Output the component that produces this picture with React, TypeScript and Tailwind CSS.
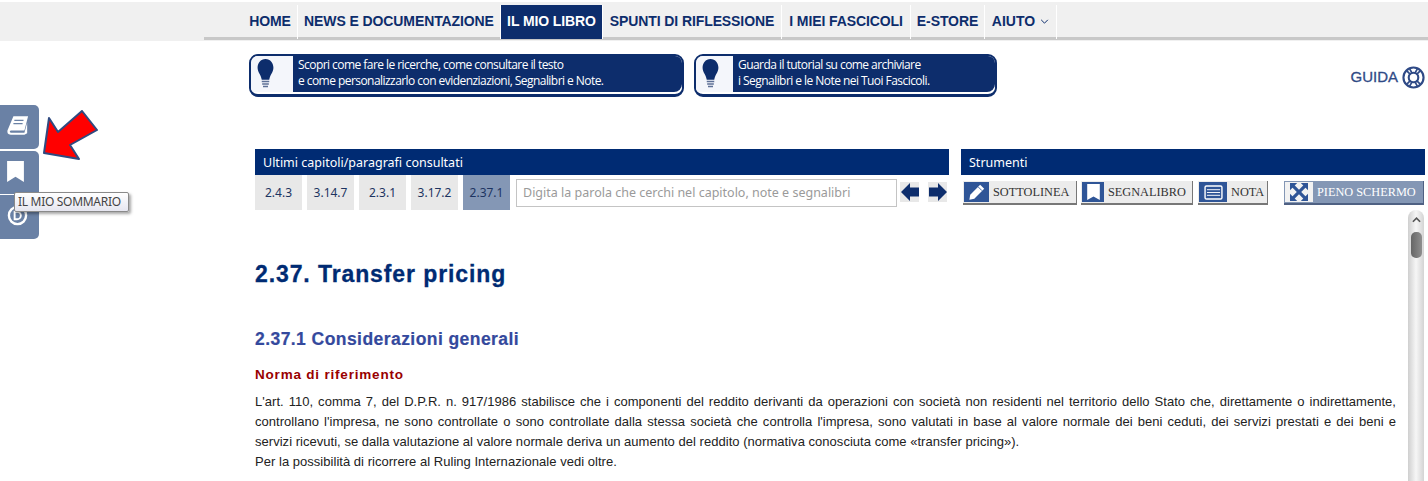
import React from "react";

const navItems = ["HOME", "NEWS E DOCUMENTAZIONE", "IL MIO LIBRO", "SPUNTI DI RIFLESSIONE", "I MIEI FASCICOLI", "E-STORE"];
const navWidths = ["w-[55px]", "w-[203px]", "w-[102px]", "w-[179px]", "w-[129px]", "w-[74px]"];
const recent = ["2.4.3", "3.14.7", "2.3.1", "3.17.2", "2.37.1"];

function Bulb() {
  return (
    <svg viewBox="0 0 20 36" className="w-[17px] h-[30px]">
      <path d="M10 0C4 0 .5 5 .5 10.500c0 5.500 4 8 5 14.500h9c1-6.500 5-9 5-14.500C19.500 5 16 0 10 0z" fill="#0d2d6c" />
      <path d="M5.500 27h9M6 30h8M7 33h6" stroke="#5d7096" strokeWidth="2" />
    </svg>
  );
}

function Banner({ w, left, lines }: { w: string; left: string; lines: string[] }) {
  return (
    <div className={`${w} h-[43px] rounded-[9px] border-2 border-b-[3px] border-[#0d2d6c] bg-white overflow-hidden`}>
      <div className="h-[36px] flex">
        <div className={`${left} bg-[#f4f6fb] flex items-center pl-[6px] shrink-0`}>
          <Bulb />
        </div>
        <div className="flex-1 bg-[#0d2d6c] rounded-br-[8px] pl-[5px] pt-[1px] text-white text-[12px] leading-[16px] tracking-[-0.55px] font-['Open_Sans',sans-serif] font-medium whitespace-nowrap">
          {lines.map((l) => (
            <div key={l}>{l}</div>
          ))}
        </div>
      </div>
    </div>
  );
}

function ToolButton({ w, cell, label, icon, muted }: { w: string; cell: string; label: string; icon: React.ReactNode; muted?: boolean }) {
  return (
    <div className={`${w} h-[24px] flex items-start pt-[1px] pl-[1px] border-r border-b-2 ${muted ? "bg-[#8497b5] text-white border-[#4f6183]" : "bg-[#ececec] text-[#333] border-[#777]"}`}>
      <div className={`${cell} h-[20px] shrink-0 flex items-center justify-center ${muted ? "bg-[#f2f2f2]" : "bg-[#2f5597]"}`}>{icon}</div>
      <span className="pl-[4px] text-[12.300px] leading-[20px] font-['Liberation_Serif',serif] whitespace-nowrap">{label}</span>
    </div>
  );
}

export default function App() {
  return (
    <div className="relative w-[1428px] h-[481px] overflow-hidden bg-white font-['Liberation_Sans',sans-serif]">
      {/* top menu */}
      <div className="mt-[2px] h-[39px] bg-[#f0f0f0]">
        <div className="ml-[204px] h-[38px] pl-[39px] flex items-start border-b-[3px] border-[#c8c8c8]">
          {navItems.map((item, i) => (
            <div
              key={item}
              className={`${navWidths[i]} h-[34px] mt-[3px] pb-[2px] flex items-center justify-center text-[14px] tracking-[-0.1px] font-bold whitespace-nowrap border-r border-white ${
                item === "IL MIO LIBRO" ? "bg-[#0d2d6c] text-white" : "text-[#0d2d6c]"
              }`}
            >
              {item}
            </div>
          ))}
          <div className="w-[72px] h-[34px] mt-[3px] pb-[2px] flex items-center justify-center gap-[5px] text-[14px] font-bold text-[#0d2d6c] border-r border-white">
            AIUTO
            <svg viewBox="0 0 10 6" className="w-[9px] h-[5px]">
              <path d="M1 1l4 4 4-4" fill="none" stroke="#0d2d6c" strokeWidth="1.200" />
            </svg>
          </div>
        </div>
      </div>

      {/* banners */}
      <div className="flex items-start pl-[249px] pr-[3px] mt-[13px]">
        <Banner
          w="w-[435px]"
          left="w-[42px]"
          lines={["Scopri come fare le ricerche, come consultare il testo", "e come personalizzarlo con evidenziazioni, Segnalibri e Note."]}
        />
        <div className="ml-[10px]">
          <Banner
            w="w-[303px]"
            left="w-[37px]"
            lines={["Guarda il tutorial su come archiviare", "i Segnalibri e le Note nei Tuoi Fascicoli."]}
          />
        </div>
        <div className="ml-auto mt-[12px] flex items-center gap-[4px] text-[#2f4a86] text-[15px] [-webkit-text-stroke:0.3px_#2f4a86]">
          GUIDA
          <svg viewBox="0 0 24 24" className="w-[23px] h-[23px]" fill="none" stroke="#2f4a86">
            <circle cx="12" cy="12" r="10.500" strokeWidth="2.200" />
            <circle cx="12" cy="12" r="5" strokeWidth="2.200" />
            <path d="M5 5l4 4M19 5l-4 4M5 19l4-4M19 19l-4-4M8 3l2.500 4.500M16 3l-2.500 4.500M8 21l2.500-4.500M16 21l-2.500-4.500" strokeWidth="1.800" />
          </svg>
        </div>
      </div>

      {/* tool bars */}
      <div className="flex pl-[255px] mt-[52px]">
        <div className="w-[694px]">
          <div className="h-[26px] bg-[#002b73] text-white text-[12.500px] leading-[27px] pl-[8px] font-['Noto_Sans',sans-serif]">
            Ultimi capitoli/paragrafi consultati
          </div>
          <div className="flex items-start">
            {recent.map((r, i) => (
              <div
                key={r}
                className={`w-[47px] h-[35px] mr-[5px] flex items-center justify-center text-[12px] text-[#1d3461] font-['Noto_Sans',sans-serif] ${
                  i === 4 ? "bg-[#8497b5]" : "bg-[#e8e8e8]"
                }`}
              >
                {r}
              </div>
            ))}
            <div className="ml-[1px] mt-[4px] w-[381px] h-[28px] border border-[#c4c4c4] text-[#9a9a9a] text-[12.500px] leading-[26px] pl-[6px] font-['Noto_Sans',sans-serif]">
              Digita la parola che cerchi nel capitolo, note e segnalibri
            </div>
            <div className="ml-[3px] mt-[7px] flex gap-[9px]">
              <div className="w-[19px] h-[20px] bg-[#e8e8e8] flex items-center justify-center">
                <svg viewBox="0 0 18 18" className="w-[18px] h-[18px]">
                  <path d="M0 9l9-9v4.500h9v9H9V18z" fill="#0d2d6c" />
                </svg>
              </div>
              <div className="w-[19px] h-[20px] bg-[#e8e8e8] flex items-center justify-center">
                <svg viewBox="0 0 18 18" className="w-[18px] h-[18px]">
                  <path d="M18 9L9 0v4.500H0v9h9V18z" fill="#0d2d6c" />
                </svg>
              </div>
            </div>
          </div>
        </div>
        <div className="ml-[12px] w-[464px]">
          <div className="h-[26px] bg-[#002b73] text-white text-[12.500px] leading-[27px] pl-[8px] font-['Noto_Sans',sans-serif]">
            Strumenti
          </div>
          <div className="flex mt-[6px] pl-[2px]">
            <ToolButton
              w="w-[114px]"
              cell="w-[25px]"
              label="SOTTOLINEA"
              icon={
                <svg viewBox="0 0 20 20" className="w-[18px] h-[18px]">
                  <path d="M13.500 2l4.500 4.500L7 17.500l-5.500 1 1-5.500z" fill="white" />
                  <path d="M11.500 4.500l4 4" stroke="#2f5597" strokeWidth="1" />
                </svg>
              }
            />
            <div className="ml-[4px]">
              <ToolButton
                w="w-[112px]"
                cell="w-[22px]"
                label="SEGNALIBRO"
                icon={
                  <svg viewBox="0 0 16 20" className="w-[15px] h-[18px]">
                    <path d="M1 1h14v18l-7-4-7 4z" fill="white" />
                  </svg>
                }
              />
            </div>
            <div className="ml-[5px]">
              <ToolButton
                w="w-[70px]"
                cell="w-[28px]"
                label="NOTA"
                icon={
                  <svg viewBox="0 0 20 16" className="w-[19px] h-[15px]" fill="none" stroke="white">
                    <rect x="1" y="1" width="18" height="14" rx="1.500" strokeWidth="1.500" />
                    <path d="M3 5h14M3 8h14M3 11h14" />
                  </svg>
                }
              />
            </div>
            <div className="ml-[16px]">
              <ToolButton
                w="w-[140px]"
                cell="w-[28px]"
                label="PIENO SCHERMO"
                muted
                icon={
                  <svg viewBox="0 0 20 20" className="w-[18px] h-[18px]" fill="#2f5597">
                    <path d="M0 0h8L0 8zM20 0v8l-8-8zM0 20v-8l8 8zM20 20h-8l8-8z" />
                    <path d="M3 3l14 14M17 3L3 17" stroke="#2f5597" strokeWidth="3.500" />
                  </svg>
                }
              />
            </div>
          </div>
        </div>
      </div>

      {/* text + scrollbar */}
      <div className="flex pl-[255px] mt-[-1px]">
        <div className="w-[1141px] pt-[51px]">
          <h1 className="text-[23px] leading-[28px] font-bold text-[#002b73] tracking-[0.9px] [-webkit-text-stroke:0.3px_#002b73]">2.37. Transfer pricing</h1>
          <h2 className="mt-[40px] text-[17.500px] leading-[22px] font-bold text-[#34499d] tracking-[0.44px] [-webkit-text-stroke:0.2px_#34499d]">2.37.1 Considerazioni generali</h2>
          <h3 className="mt-[16px] text-[13.500px] leading-[18px] font-bold text-[#990000] tracking-[0.8px]">Norma di riferimento</h3>
          <div className="mt-[8px] text-[13px] leading-[20px] text-[#222] tracking-[0.03px]">
            <p className="[text-align-last:justify]">
              L'art. 110, comma 7, del D.P.R. n. 917/1986 stabilisce che i componenti del reddito derivanti da operazioni con società non residenti nel territorio dello Stato che, direttamente o indirettamente,
            </p>
            <p className="[text-align-last:justify]">
              controllano l'impresa, ne sono controllate o sono controllate dalla stessa società che controlla l'impresa, sono valutati in base al valore normale dei beni ceduti, dei servizi prestati e dei beni e
            </p>
            <p>servizi ricevuti, se dalla valutazione al valore normale deriva un aumento del reddito (normativa conosciuta come «transfer pricing»).</p>
            <p>Per la possibilità di ricorrere al Ruling Internazionale vedi oltre.</p>
          </div>
        </div>
        <div className="ml-[12px] mt-[1px] w-[16px] h-[274px] bg-gradient-to-r from-[#cfcfcf] via-[#f6f6f6] to-[#d4d4d4] rounded-t-[8px] flex flex-col items-center">
          <svg viewBox="0 0 10 6" className="w-[9px] h-[6px] mt-[7px]">
            <path d="M1 5l4-4 4 4" fill="none" stroke="#555" strokeWidth="1.800" />
          </svg>
          <div className="mt-[9px] w-[11px] h-[26px] rounded-[5px] bg-gradient-to-r from-[#666] to-[#8f8f8f]" />
        </div>
      </div>

      {/* side tabs */}
      <div className="absolute left-0 top-[105px] w-[39px] h-[134px] flex flex-col">
        <div className="h-[44px] bg-[#6a81a5] rounded-r-[5px] flex items-center justify-center pr-[4px] pb-[4px]">
          <svg viewBox="0 0 24 22" className="w-[22px] h-[21px]" fill="white">
            <path d="M7 1h16l-4 15.500H4.500C3 16.500 2.500 18 4 19h15l3-11v11.500L19 21H4c-3 0-4-2-3.500-4.500z" />
            <path d="M8 5.500h10M7 9h10" stroke="#6a81a5" strokeWidth="1.300" />
          </svg>
        </div>
        <div className="h-[44px] mt-[2px] bg-[#6a81a5] rounded-tr-[5px] flex items-center justify-center border-b border-white pr-[8px] pb-[2px]">
          <svg viewBox="0 0 16 20" className="w-[17px] h-[21px]">
            <path d="M0 0h16v20l-8-5-8 5z" fill="white" />
          </svg>
        </div>
        <div className="h-[44px] bg-[#6a81a5] rounded-br-[5px] flex items-start justify-center pr-[4px] pt-[10px]">
          <svg viewBox="0 0 22 22" className="w-[21px] h-[21px]" fill="none" stroke="white">
            <circle cx="11" cy="11" r="9" strokeWidth="2.500" />
            <path d="M8 7h2.500a4 4 0 0 1 0 8H8z" strokeWidth="2" />
          </svg>
        </div>
      </div>

      {/* tooltip */}
      <div className="absolute left-[14px] top-[192px] w-[115px] h-[20px] border border-[#8a8a8a] rounded-[2px] bg-gradient-to-b from-white to-[#e6e6f0] shadow-[2px_2px_3px_rgba(0,0,0,0.35)] text-[#444] text-[12px] leading-[18px] pl-[3px] whitespace-nowrap font-['Noto_Sans',sans-serif] tracking-[-0.3px]">
        IL MIO SOMMARIO
      </div>

      {/* red arrow */}
      <svg viewBox="0 0 56 50" className="absolute left-[43px] top-[110px] w-[56px] h-[50px]">
        <path d="M1 43L6 8l9 14L39 1l15 19-27 15 9 14z" fill="#ff0000" stroke="#2f4a80" strokeWidth="2" strokeLinejoin="round" />
      </svg>
    </div>
  );
}
